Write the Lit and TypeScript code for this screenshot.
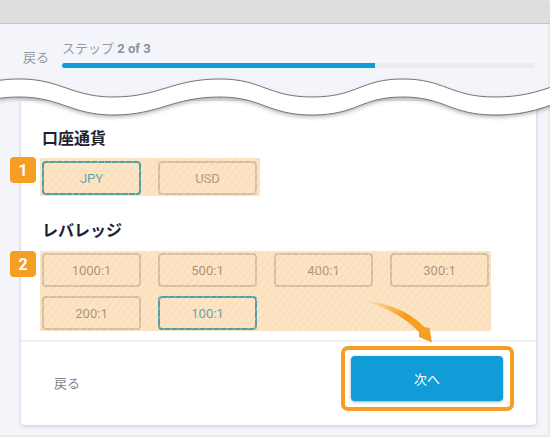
import { LitElement, html, css, svg } from "lit";
import { customElement } from "lit/decorators.js";

const wavePath = (dy: number) =>
  `M-10 ${82 + dy} C 0 ${80 + dy} 8 ${79 + dy} 20 ${79 + dy} C 60 ${79 + dy} 72 ${97 + dy} 113 ${97 + dy} C 160 ${97 + dy} 172 ${79 + dy} 220 ${79 + dy} C 262 ${79 + dy} 268 ${97 + dy} 312 ${97 + dy} C 358 ${97 + dy} 360 ${79 + dy} 403 ${79 + dy} C 445 ${79 + dy} 450 ${97 + dy} 495 ${97 + dy} C 520 ${97 + dy} 535 ${93 + dy} 560 ${84 + dy}`;

const bandPath = `${wavePath(0)} L560 ${84 + 18} C 535 ${93 + 18} 520 ${97 + 18} 495 ${97 + 18} C 450 ${97 + 18} 445 ${79 + 18} 403 ${79 + 18} C 360 ${79 + 18} 358 ${97 + 18} 312 ${97 + 18} C 268 ${97 + 18} 262 ${79 + 18} 220 ${79 + 18} C 172 ${79 + 18} 160 ${97 + 18} 113 ${97 + 18} C 72 ${97 + 18} 60 ${79 + 18} 20 ${79 + 18} C 8 ${79 + 18} 0 ${80 + 18} -10 ${82 + 18} Z`;

@customElement("app-root")
export class AppRoot extends LitElement {
  static styles = css`
    :host {
      display: block;
      position: relative;
      width: 550px;
      height: 437px;
      overflow: hidden;
      background: #f3f5fa;
      box-shadow: inset -2px -2px 0 #ebebed;
      font-family: Roboto, "Noto Sans CJK JP", sans-serif;
    }
    .top {
      height: 23px;
      background: #dedede;
      border-bottom: 1px solid #c6c6c6;
      border-top-right-radius: 4px;
    }
    .stepper {
      display: flex;
      align-items: flex-start;
      height: 77px;
      padding: 16px 15px 0 23px;
      box-sizing: border-box;
    }
    .back-top {
      font-size: 13px;
      line-height: 18px;
      color: #949ba6;
      margin: 9px 13px 0 0;
    }
    .prog { flex: 1; }
    .prog-label {
      font-size: 13px;
      line-height: 18px;
      color: #949ba6;
      height: 23px;
    }
    .prog-label b { font-size: 13px; font-weight: 700; color: #8a919d; }
    .track {
      height: 5px;
      border-radius: 3px;
      background: #ececee;
      overflow: hidden;
    }
    .fill { height: 100%; background: #109cd6; }
    .card {
      position: relative;
      margin: 0 14px 0 21px;
      height: 324px;
      background: #fff;
      border-radius: 0 0 4px 4px;
      box-shadow: 0 1px 4px rgba(0, 0, 0, 0.18);
      display: flex;
      flex-direction: column;
    }
    .body { flex: 1; padding: 28px 20px 0 21px; }
    h2 {
      margin: 0;
      font-size: 16px;
      line-height: 20px;
      font-weight: 700;
      color: #1c2330;
    }
    .grid {
      display: grid;
      grid-template-columns: repeat(4, 99px);
      column-gap: 17px;
      row-gap: 9px;
      margin-top: 12px;
    }
    .section2 { margin-top: 26px; }
    .opt {
      height: 34px;
      box-sizing: border-box;
      border: 2px solid #c6cad1;
      border-radius: 4px;
      background: #fff;
      color: #7f8994;
      font-size: 13px;
      display: flex;
      align-items: center;
      justify-content: center;
    }
    .opt.on { border-color: #0097d3; color: #109cd6; }
    .footer {
      height: 85px;
      flex: none;
      border-top: 2px solid #f1f2f4;
      display: flex;
      align-items: center;
      justify-content: space-between;
      padding: 0 33px 3px 33px;
      box-sizing: border-box;
    }
    .back {
      font-size: 13px;
      color: #7f8794;
    }
    .next {
      width: 152px;
      height: 45px;
      margin-bottom: 8px;
      border-radius: 4px;
      background: #109cd6;
      color: #fff;
      font-size: 13px;
      display: flex;
      align-items: center;
      justify-content: center;
      box-shadow: 0 1px 3px rgba(0, 0, 0, 0.35);
    }
    .wave {
      position: absolute;
      left: 0;
      top: 0;
      width: 550px;
      height: 437px;
      pointer-events: none;
    }
    .hatch {
      position: absolute;
      background-color: rgba(247, 170, 70, 0.35);
      background-image: repeating-linear-gradient(
        -52deg,
        rgba(255, 255, 255, 0.32) 0 0.8px,
        transparent 0.8px 5.5px
      );
    }
    .hatch.a { left: 40px; top: 158px; width: 220px; height: 38px; }
    .hatch.b { left: 40px; top: 251px; width: 451px; height: 80px; }
    .badge {
      position: absolute;
      left: 10px;
      width: 26px;
      height: 26px;
      border-radius: 4px;
      background: #f69e23;
      color: #fff;
      font-size: 16px;
      font-weight: 700;
      display: flex;
      align-items: center;
      justify-content: center;
    }
    .badge.a { top: 157px; }
    .badge.b { top: 251px; }
    .ring {
      position: absolute;
      left: 341px;
      top: 346px;
      width: 173px;
      height: 65px;
      box-sizing: border-box;
      border: 4px solid #f69e23;
      border-radius: 7px;
    }
  `;

  render() {
    return html`
      <div class="top"></div>
      <div class="stepper">
        <div class="back-top">戻る</div>
        <div class="prog">
          <div class="prog-label">ステップ <b>2 of 3</b></div>
          <div class="track"><div class="fill" style="width:66.2%"></div></div>
        </div>
      </div>
      <div class="card">
        <div class="body">
          <h2>口座通貨</h2>
          <div class="grid">
            <div class="opt on">JPY</div>
            <div class="opt">USD</div>
          </div>
          <div class="section2">
            <h2>レバレッジ</h2>
            <div class="grid">
              <div class="opt">1000:1</div>
              <div class="opt">500:1</div>
              <div class="opt">400:1</div>
              <div class="opt">300:1</div>
              <div class="opt">200:1</div>
              <div class="opt on">100:1</div>
            </div>
          </div>
        </div>
        <div class="footer">
          <div class="back">戻る</div>
          <div class="next">次へ</div>
        </div>
      </div>
      <div class="hatch a"></div>
      <div class="hatch b"></div>
      <svg class="wave" viewBox="0 0 550 437">
        ${svg`
          <defs>
            <filter id="s" x="-5%" y="-20%" width="110%" height="160%">
              <feDropShadow dx="0" dy="2" stdDeviation="2" flood-color="#000" flood-opacity=".3"/>
            </filter>
            <linearGradient id="g" gradientUnits="userSpaceOnUse" x1="364" y1="301" x2="405" y2="315">
              <stop offset="0" stop-color="#f69e23" stop-opacity="0"/>
              <stop offset="1" stop-color="#f69e23"/>
            </linearGradient>
          </defs>
          <path d="${bandPath}" fill="#fff" filter="url(#s)"/>
          <path d="${wavePath(0)}" fill="none" stroke="#555" stroke-width=".8"/>
          <path d="${wavePath(18)}" fill="none" stroke="#555" stroke-width=".8"/>
          <path d="M364 301 C 384 302 410 311 424 327 L 429.500 328 L 432 342.500 L 419 337 L 419 332 C 406 318 388 308 364 301 Z" fill="url(#g)"/>
        `}
      </svg>
      <div class="badge a">1</div>
      <div class="badge b">2</div>
      <div class="ring"></div>
    `;
  }
}
